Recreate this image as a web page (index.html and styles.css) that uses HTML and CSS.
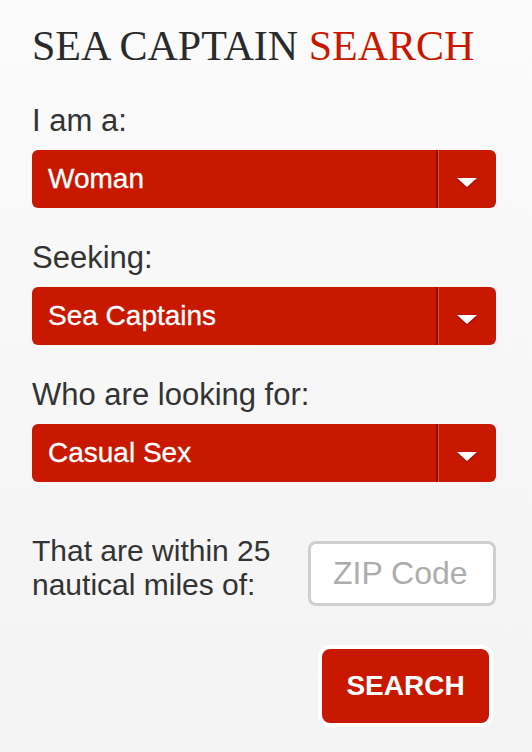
FILE: index.html
```html
<!DOCTYPE html>
<html>
<head>
<meta charset="utf-8">
<link rel="stylesheet" href="styles.css">
</head>
<body>
<div class="panel">
  <h1 class="title">SEA CAPTAIN <span class="accent">SEARCH</span></h1>

  <div class="field">
    <div class="label">I am a:</div>
    <div class="select"><span class="value">Woman</span><span class="toggle"><span class="arrow"></span></span></div>
  </div>

  <div class="field">
    <div class="label">Seeking:</div>
    <div class="select"><span class="value">Sea Captains</span><span class="toggle"><span class="arrow"></span></span></div>
  </div>

  <div class="field">
    <div class="label">Who are looking for:</div>
    <div class="select"><span class="value">Casual Sex</span><span class="toggle"><span class="arrow"></span></span></div>
  </div>

  <div class="zip-row">
    <div class="zip-label">That are within 25<br>nautical miles of:</div>
    <input class="zip" type="text" placeholder="ZIP Code">
  </div>

  <div class="actions">
    <button class="search" type="button">SEARCH</button>
  </div>
</div>
</body>
</html>
```

FILE: styles.css
```css
html, body {
  margin: 0;
  padding: 0;
}
body {
  width: 532px;
  height: 752px;
  background: linear-gradient(#fbfbfb, #f3f3f3);
  font-family: "Liberation Sans", Arial, sans-serif;
  color: #333;
}
.panel {
  padding: 22px 36px 0 32px;
}
.title {
  margin: 0;
  font-family: "Liberation Serif", "Times New Roman", serif;
  font-weight: normal;
  font-size: 42px;
  line-height: 48px;
  color: #2a2a2a;
  white-space: nowrap;
}
.accent {
  color: #c91800;
}
.field {
  margin-top: 33px;
}
.field + .field {
  margin-top: 32px;
}
.label {
  font-size: 31px;
  line-height: 36px;
  margin-bottom: 11px;
}
.select {
  display: flex;
  height: 58px;
  background: #c91800;
  border-radius: 6px;
  color: #fff;
  font-size: 28px;
}
.value {
  flex: 1;
  display: flex;
  align-items: center;
  padding-left: 16px;
  -webkit-text-stroke: 0.3px #fff;
}
.toggle {
  width: 58px;
  display: flex;
  align-items: center;
  justify-content: center;
  border-left: 2px solid #8e1100;
  box-shadow: inset 1px 0 0 #d9503d;
}
.arrow {
  width: 0;
  height: 0;
  border-left: 10px solid transparent;
  border-right: 10px solid transparent;
  border-top: 9px solid #fff;
  margin-top: 6px;
  filter: drop-shadow(0 1px 1px rgba(80, 0, 0, 0.5));
}
.zip-row {
  display: flex;
  justify-content: space-between;
  align-items: flex-start;
  margin-top: 52px;
}
.zip-label {
  font-size: 30px;
  line-height: 34px;
}
.zip {
  box-sizing: border-box;
  width: 188px;
  height: 65px;
  margin-top: 7px;
  border: 3px solid #cfcfcf;
  border-radius: 8px;
  background: #fff;
  font-family: "Liberation Sans", Arial, sans-serif;
  font-size: 32px;
  padding: 0 8px 0 22px;
  color: #333;
  outline: none;
}
.zip::placeholder {
  color: #adadad;
}
.actions {
  display: flex;
  justify-content: flex-end;
  margin-top: 39px;
  padding-right: 3px;
}
.search {
  box-sizing: border-box;
  width: 175px;
  height: 82px;
  background: #c91800;
  border: 4px solid #fff;
  border-radius: 12px;
  color: #fff;
  font-family: "Liberation Sans", Arial, sans-serif;
  font-weight: bold;
  font-size: 28px;
  padding: 0;
}
```
